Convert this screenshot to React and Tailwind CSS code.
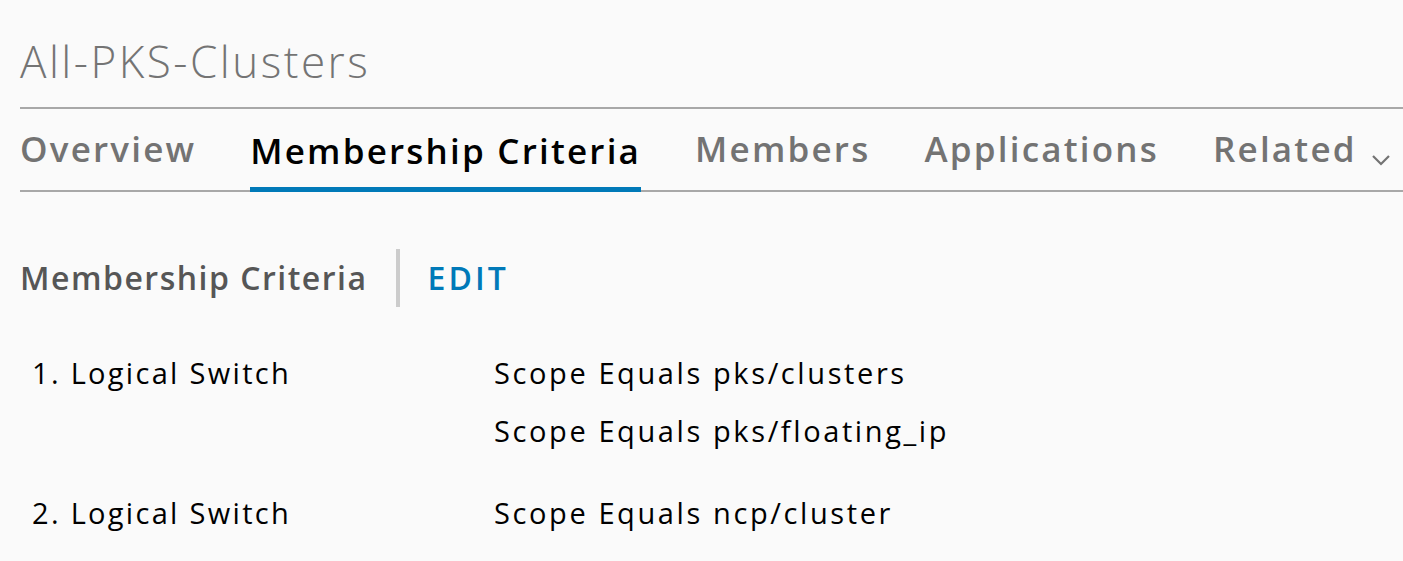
const tabs = [
  { label: 'Overview' },
  { label: 'Membership Criteria', active: true },
  { label: 'Members' },
  { label: 'Applications' },
  { label: 'Related', menu: true },
];

const criteria = [
  { name: '1. Logical Switch', rules: ['Scope Equals pks/clusters', 'Scope Equals pks/floating_ip'] },
  { name: '2. Logical Switch', rules: ['Scope Equals ncp/cluster'] },
];

function Chevron() {
  return (
    <svg width="20" height="14" viewBox="0 0 20 14" className="ml-[14px] mt-[26px] shrink-0">
      <path d="M2 3 L10 11 L18 3" fill="none" stroke="#737373" strokeWidth="2.2" />
    </svg>
  );
}

export default function App() {
  return (
    <div className="min-h-screen bg-[#fafafa] pl-5 font-['Open_Sans',sans-serif] overflow-hidden">
      {/* Title */}
      <h1 className="pt-[39px] text-[44px] leading-[44px] font-light tracking-[2.5px] text-[#747474]">
        All-PKS-Clusters
      </h1>
      <div className="mt-[24px] h-[2px] bg-[#a8a8a8]" />

      {/* Tabs */}
      <ul className="flex gap-[54px] border-b-2 border-[#a8a8a8] h-[83px] items-end">
        {tabs.map((tab) => (
          <li
            key={tab.label}
            className={
              'flex items-start h-full pt-[18px] text-[35px] leading-[44px] font-semibold tracking-[2.2px] whitespace-nowrap ' +
              (tab.active
                ? 'text-black border-b-[5px] border-[#0079b8] -mb-[2px]'
                : 'text-[#737373]')
            }
          >
            {tab.label}
            {tab.menu && <Chevron />}
          </li>
        ))}
      </ul>

      {/* Section header */}
      <div className="mt-[57px] flex items-center h-[58px]">
        <h2 className="text-[32px] font-semibold tracking-[1.5px] text-[#565656] leading-none">
          Membership Criteria
        </h2>
        <div className="ml-[28px] w-[4px] h-full bg-[#cccccc]" />
        <button className="ml-[28px] text-[32px] font-semibold tracking-[3px] text-[#0079b8] leading-none">
          EDIT
        </button>
      </div>

      {/* Criteria rows */}
      <div className="mt-[37px] pl-3">
        {criteria.map((c) => (
          <div key={c.name} className="flex mb-[24px] text-[29px] text-black leading-[58px]">
            <div className="w-[462px] tracking-[2.3px]">{c.name}</div>
            <div className="tracking-[2.6px]">
              {c.rules.map((r) => (
                <div key={r}>{r}</div>
              ))}
            </div>
          </div>
        ))}
      </div>
    </div>
  );
}
